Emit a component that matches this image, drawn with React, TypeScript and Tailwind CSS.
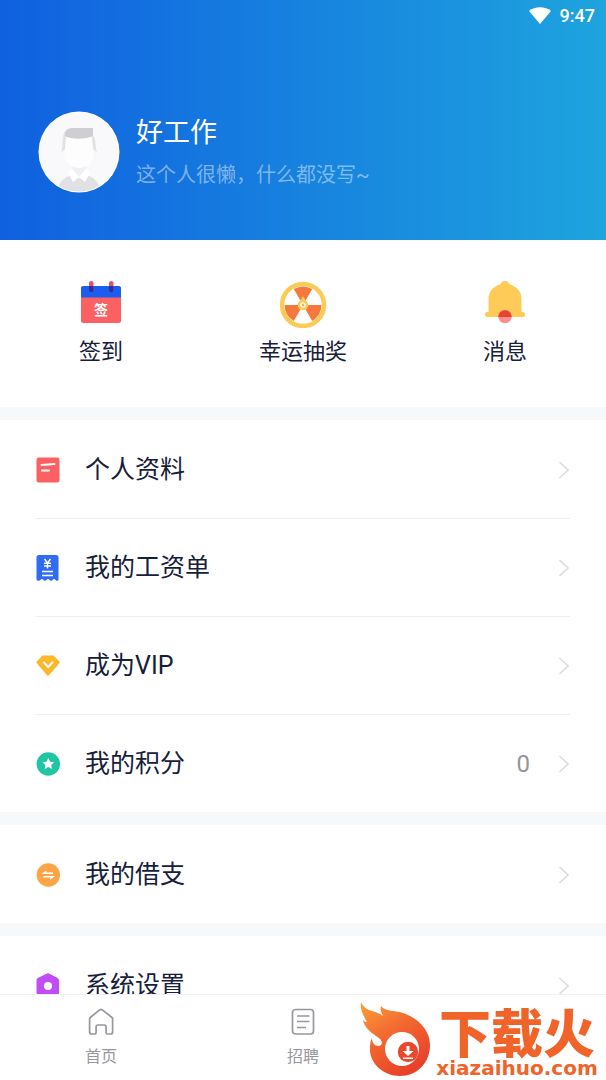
import type { ReactNode } from "react";

interface IMenuItem {
  label: string;
  icon: ReactNode;
  value?: string;
}

const CalendarIcon = () => (
  <svg width="48" height="48" viewBox="0 0 48 48">
    <rect x="4" y="6" width="40" height="37" rx="2.500" fill="#fb6062" />
    <path d="M4 17.500V8.500a2.500 2.500 0 0 1 2.500-2.500h35a2.500 2.500 0 0 1 2.500 2.500v9z" fill="#1c5cf0" />
    <rect x="12" y="1" width="4.500" height="11" rx="2.200" fill="#e2506e" />
    <rect x="32" y="1" width="4.500" height="11" rx="2.200" fill="#e2506e" />
    <path d="M12 6h4.500v4a2.200 2.200 0 0 1-4.500 0zM32 6h4.500v4a2.200 2.200 0 0 1-4.500 0z" fill="#2a2f9c" />
    <text x="24" y="35" textAnchor="middle" fontSize="14" fontWeight="700" fill="#fff">
      签
    </text>
  </svg>
);

const WheelIcon = () => (
  <svg width="48" height="48" viewBox="0 0 48 48">
    <circle cx="24" cy="25" r="21" fill="#fff" stroke="#fccb55" strokeWidth="4.400" />
    <path d="M24 25 14.800 9.100a18.400 18.400 0 0 1 18.400 0z" fill="#f5793c" />
    <path d="M24 25h18.400a18.400 18.400 0 0 1-9.200 15.900z" fill="#f5793c" />
    <path d="M24 25l-9.200 15.900A18.400 18.400 0 0 1 5.600 25z" fill="#f5793c" />
    <path d="M24 16l3.500 6h-7z" fill="#fccb55" />
    <circle cx="24" cy="25" r="4" fill="#fff" stroke="#fccb55" strokeWidth="2.600" />
    <circle cx="24" cy="25" r="1.400" fill="#f9b04e" />
  </svg>
);

const BellIcon = () => (
  <svg width="48" height="48" viewBox="0 0 48 48">
    <path
      d="M24 1a5 5 0 0 1 4.600 3.300C36 6.500 40.500 12 40.500 19v13H42a2 2 0 0 1 2 2v1a2 2 0 0 1-2 2H6a2 2 0 0 1-2-2v-1a2 2 0 0 1 2-2h1.500V19c0-7 4.500-12.500 11.900-14.700A5 5 0 0 1 24 1z"
      fill="#fecb58"
    />
    <circle cx="24" cy="36.500" r="6.800" fill="#fb8f8f" />
    <path d="M17.200 37a6.800 6.800 0 1 1 13.600 0z" fill="#e8452f" />
  </svg>
);

const ProfileIcon = () => (
  <svg width="26" height="28" viewBox="0 0 26 28">
    <rect x="0.500" y="1.500" width="23" height="25" rx="2.500" fill="#fb6062" />
    <path d="M5.500 9 18.500 8M6 14.500h7" stroke="#fff" strokeWidth="1.900" strokeLinecap="round" fill="none" />
  </svg>
);

const PayslipIcon = () => (
  <svg width="26" height="28" viewBox="0 0 26 28">
    <path
      d="M3 1h17a2.500 2.500 0 0 1 2.500 2.500V26l-1.500 1-1.500-1a1.700 1.700 0 0 0-3 0l-1.500 1-1.500-1a1.700 1.700 0 0 0-3 0L9 27l-1.500-1a1.700 1.700 0 0 0-3 0L2.500 27 .5 26V3.500A2.500 2.500 0 0 1 3 1z"
      fill="#2f6cf3"
    />
    <path
      d="M8.500 5l3 4 3-4M11.500 9v5.500M8 9.300h7M8 12h7M6 17.500h11M6 21.500h11"
      stroke="#fff"
      strokeWidth="1.400"
      fill="none"
    />
  </svg>
);

const VipIcon = () => (
  <svg width="26" height="28" viewBox="0 0 26 28">
    <path
      d="M6.500 4.500h11l5.500 6L12 23 1.200 10.500z"
      fill="#fbb829"
      stroke="#fbb829"
      strokeWidth="1.800"
      strokeLinejoin="round"
    />
    <path d="M7.500 10l4.700 5 4.700-5" stroke="#fff" strokeWidth="2" fill="none" />
  </svg>
);

const PointsIcon = () => (
  <svg width="26" height="28" viewBox="0 0 26 28">
    <circle cx="12.300" cy="14" r="11.700" fill="#20c6a4" />
    <path
      d="M12.300 8l1.800 3.700 4 .5-2.900 2.800.7 4-3.600-1.900L8.700 19l.7-4-2.900-2.800 4-.5z"
      fill="#fff"
    />
  </svg>
);

const LoanIcon = () => (
  <svg width="26" height="28" viewBox="0 0 26 28">
    <circle cx="12.300" cy="14" r="11.700" fill="#fda544" />
    <path d="M17 12.300H7.500l3-2.300M7.500 15.700H17L14 18" stroke="#fff" strokeWidth="1.500" fill="none" />
  </svg>
);

const SettingsIcon = () => (
  <svg width="26" height="28" viewBox="0 0 26 28">
    <path
      d="M10.500 1.800a3 3 0 0 1 3 0l7.700 4a3 3 0 0 1 1.800 2.700v12a3 3 0 0 1-1.500 2.600L13.500 27a3 3 0 0 1-3 0L2 23.100a3 3 0 0 1-1.500-2.600v-12a3 3 0 0 1 1.800-2.700z"
      fill="#c04df8"
    />
    <circle cx="12" cy="14" r="4" fill="#fff" />
  </svg>
);

const quickActions = [
  { label: "签到", icon: <CalendarIcon /> },
  { label: "幸运抽奖", icon: <WheelIcon /> },
  { label: "消息", icon: <BellIcon /> },
];

const menuGroups: IMenuItem[][] = [
  [
    { label: "个人资料", icon: <ProfileIcon /> },
    { label: "我的工资单", icon: <PayslipIcon /> },
    { label: "成为VIP", icon: <VipIcon /> },
    { label: "我的积分", icon: <PointsIcon />, value: "0" },
  ],
  [{ label: "我的借支", icon: <LoanIcon /> }],
  [{ label: "系统设置", icon: <SettingsIcon /> }],
];

const Avatar = () => (
  <svg className="size-[82px] shrink-0" viewBox="0 0 82 82">
    <defs>
      <clipPath id="avatar">
        <circle cx="41" cy="41" r="39.500" />
      </clipPath>
    </defs>
    <circle cx="41" cy="41" r="40.500" fill="#fff" />
    <g clipPath="url(#avatar)">
      <rect width="82" height="82" fill="#f9f9fb" />
      <path d="M20 82c0-10 5-15 13-18h16c8 3 13 8 13 18z" fill="#e1e1e5" />
      <path d="M34 50h14v10l-7 8-7-8z" fill="#f0f0f3" />
      <path d="M34 58l7 8-6 5-5-9zM48 58l-7 8 6 5 5-9z" fill="#fff" />
      <path d="M26 26h30v16c0 9-7 15-15 15s-15-6-15-15z" fill="#fdfdfe" />
      <path d="M23 42c2-5 1-10 2-16 1-7 4-9 9-9h21v8c3 2 2 9 4 17l-4-4-1-12H28l-1 12z" fill="#e2e2e6" />
      <path d="M27 24c0-5 4-7 9-7h19v8c-6 3-21 4-28 0z" fill="#cfcfd3" />
    </g>
  </svg>
);

const Chevron = () => (
  <svg width="12" height="18" viewBox="0 0 12 18">
    <path d="M1.500 1l8.500 8-8.500 8" fill="none" stroke="#dcdce0" strokeWidth="1.600" />
  </svg>
);

const MenuRow = ({ label, icon, value }: IMenuItem) => (
  <li className="border-t border-[#eeeef0] first:border-transparent">
    <a href="#" className="flex h-[97px] items-center">
      <span className="w-[49px]">{icon}</span>
      <span className="flex-1 text-[25px]">{label}</span>
      {value && <span className="mr-7 text-2xl text-[#94959d]">{value}</span>}
      <Chevron />
    </a>
  </li>
);

const HomeIcon = () => (
  <svg width="28" height="30" viewBox="0 0 28 30" fill="none" stroke="#96979f" strokeWidth="1.700" strokeLinejoin="round">
    <path d="M13 2.700a1.700 1.700 0 0 1 2 0l10 7.800a1.500 1.500 0 0 1 .6 1.200V25a2 2 0 0 1-2 2h-3a1.500 1.500 0 0 1-1.500-1.500V20a2 2 0 0 0-2-2h-6a2 2 0 0 0-2 2v5.500A1.500 1.500 0 0 1 7.600 27h-3a2 2 0 0 1-2-2V11.700a1.500 1.500 0 0 1 .6-1.200z" />
  </svg>
);

const JobsIcon = () => (
  <svg width="28" height="30" viewBox="0 0 28 30" fill="none" stroke="#96979f" strokeWidth="1.700">
    <rect x="3.500" y="2.500" width="21" height="24.500" rx="3" />
    <path d="M8 9h12.500M8 14.500h12.500M8 20.500h9" />
  </svg>
);

const MineIcon = () => (
  <svg width="28" height="30" viewBox="0 0 28 30" fill="none" stroke="#f2f2f4" strokeWidth="1.700">
    <circle cx="14" cy="8" r="5.500" />
    <path d="M3 27c0-7 5-11 11-11s11 4 11 11z" />
  </svg>
);

const SiteBadge = () => (
  <div className="absolute right-1 bottom-0 flex text-[#f0642a]">
    <svg width="72" height="80" viewBox="0 0 72 80">
      <defs>
        <linearGradient id="flame" x1="0" y1="0" x2="0.600" y2="1">
          <stop offset="0" stopColor="#fba03a" />
          <stop offset="0.500" stopColor="#f2672f" />
          <stop offset="1" stopColor="#e8412a" />
        </linearGradient>
      </defs>
      <path
        d="M1 2c3 6 7 8 11 9 5 1 8 3 11 5-2-4-3-6-2-10 5 6 13 4 22 7 15 5 27 17 27 32 0 18-13 31-30 31S10 63 10 50c0-5 0-8 2-12 0 4 2 8 6 8 5 0 5-5 1-8C11 33 4 27 3 20c2 2 3 2 4 2C3 15 0 10 1 2z"
        fill="url(#flame)"
      />
      <circle cx="42" cy="49" r="17" fill="#fff" />
      <circle cx="48" cy="52" r="10.200" fill="#e9482c" />
      <path d="M46.500 46h3v5h4L48 56l-5.500-5h4zM43 57.500h10V59H43z" fill="#fff" />
    </svg>
    <div className="flex w-[170px] flex-col items-center pt-3">
      <span className="text-[52px] leading-12 font-black">下载火</span>
      <span className="font-['DejaVu_Sans'] text-xl leading-4 font-bold">xiazaihuo.com</span>
    </div>
  </div>
);

const navItems = [
  { label: "首页", icon: <HomeIcon /> },
  { label: "招聘", icon: <JobsIcon /> },
  { label: "", icon: <MineIcon /> },
];

export default function App() {
  return (
    <div className="flex h-screen flex-col overflow-hidden bg-white font-[Roboto,'Noto_Sans_CJK_SC',sans-serif] text-[#17203b]">
      <main className="min-h-0 flex-1 overflow-y-auto [scrollbar-width:none]">
        <header className="h-60 bg-linear-to-r/srgb from-[#1060e0] to-[#1ea4de] text-white">
          <div className="flex h-8 items-center justify-end gap-2 pr-[11px] text-lg font-medium">
            <svg width="24" height="18" viewBox="0 0 24 18">
              <path d="M1 4C7-1 17-1 23 4L12 17z" fill="#fff" />
            </svg>
            <span>9:47</span>
          </div>
          <div className="mt-[75px] flex items-center gap-4 pl-[38px]">
            <Avatar />
            <div className="pt-1.5">
              <h1 className="text-[27px] leading-10">好工作</h1>
              <p className="text-xl leading-11 text-white/45">这个人很懒，什么都没写~</p>
            </div>
          </div>
        </header>

        <section className="grid h-[167px] grid-cols-3 pt-10">
          {quickActions.map((item) => (
            <button key={item.label} className="flex flex-col items-center gap-2 self-start">
              {item.icon}
              <span className="text-[22px] leading-8">{item.label}</span>
            </button>
          ))}
        </section>

        {menuGroups.map((group) => (
          <ul key={group[0].label} className="border-t-13 border-[#f7f8fa] px-9">
            {group.map((item) => (
              <MenuRow key={item.label} {...item} />
            ))}
          </ul>
        ))}
      </main>

      <nav className="relative grid h-[86px] shrink-0 grid-cols-3 border-t border-[#f1f1f3] pt-3">
        {navItems.map((item, i) => (
          <a key={i} href="#" className="flex flex-col items-center gap-2 text-base leading-6 text-[#96979f]">
            {item.icon}
            <span>{item.label}</span>
          </a>
        ))}
        <SiteBadge />
      </nav>
    </div>
  );
}
